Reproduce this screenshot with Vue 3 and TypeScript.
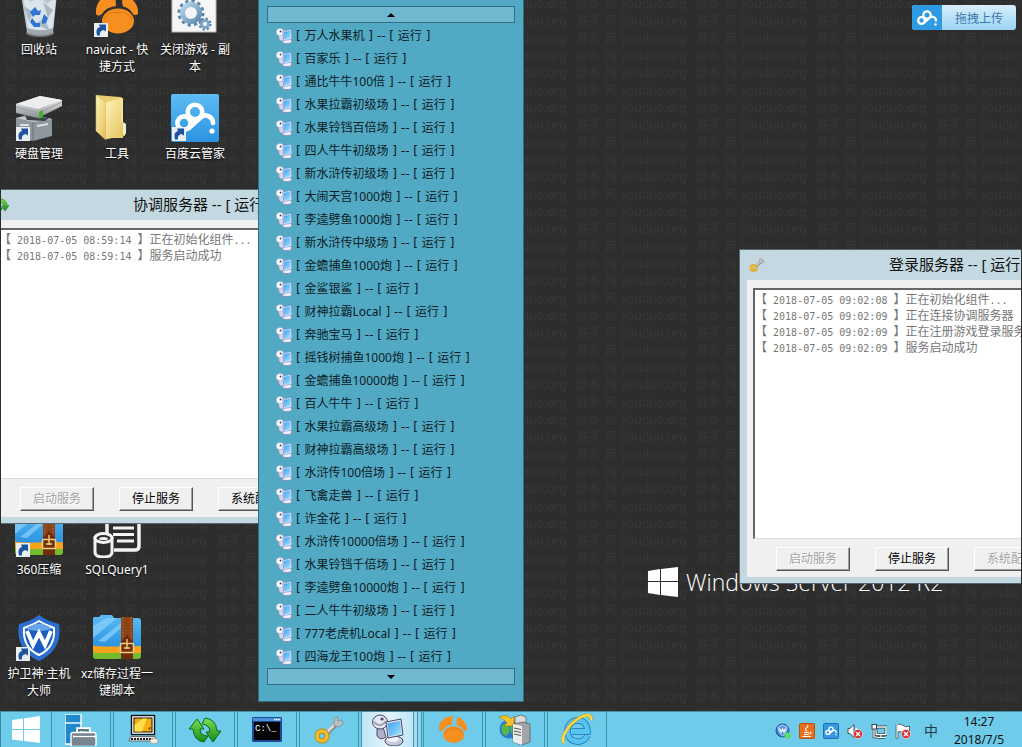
<script setup lang="ts">
import { ref } from 'vue'

interface Shortcut {
  icon: string
  label: string
  col: number
  row: number
  link?: boolean
}

interface LogLine {
  time: string
  text: string
  dots?: boolean
}

interface ServerWindow {
  id: string
  icon: string
  title: string
  configurable: boolean
  log: LogLine[]
}

const shortcuts: Shortcut[] = [
  { icon: 'recycle', label: '回收站', col: 1, row: 1 },
  { icon: 'navicat', label: 'navicat - 快\n捷方式', col: 2, row: 1, link: true },
  { icon: 'gears', label: '关闭游戏 - 副\n本', col: 3, row: 1 },
  { icon: 'disk', label: '硬盘管理', col: 1, row: 2, link: true },
  { icon: 'folder', label: '工具', col: 2, row: 2 },
  { icon: 'cloud', label: '百度云管家', col: 3, row: 2, link: true },
  { icon: 'zip', label: '360压缩', col: 1, row: 6, link: true },
  { icon: 'sql', label: 'SQLQuery1', col: 2, row: 6 },
  { icon: 'shield', label: '护卫神·主机\n大师', col: 1, row: 7, link: true },
  { icon: 'zip', label: 'xz储存过程一\n键脚本', col: 2, row: 7 },
]

const windows: ServerWindow[] = [
  {
    id: 'coordinator',
    icon: 'sync',
    title: '协调服务器 -- [ 运行 ]',
    configurable: true,
    log: [
      { time: '2018-07-05 08:59:14', text: '正在初始化组件', dots: true },
      { time: '2018-07-05 08:59:14', text: '服务启动成功' },
    ],
  },
  {
    id: 'login',
    icon: 'key',
    title: '登录服务器 -- [ 运行 ]',
    configurable: false,
    log: [
      { time: '2018-07-05 09:02:08', text: '正在初始化组件', dots: true },
      { time: '2018-07-05 09:02:09', text: '正在连接协调服务器' },
      { time: '2018-07-05 09:02:09', text: '正在注册游戏登录服务器' },
      { time: '2018-07-05 09:02:09', text: '服务启动成功' },
    ],
  },
]

const games: string[] = [
  '万人水果机', '百家乐', '通比牛牛100倍', '水果拉霸初级场', '水果铃铛百倍场',
  '四人牛牛初级场', '新水浒传初级场', '大闹天宫1000炮', '李逵劈鱼1000炮',
  '新水浒传中级场', '金蟾捕鱼1000炮', '金鲨银鲨', '财神拉霸Local', '奔驰宝马',
  '摇钱树捕鱼1000炮', '金蟾捕鱼10000炮', '百人牛牛', '水果拉霸高级场',
  '财神拉霸高级场', '水浒传100倍场', '飞禽走兽', '诈金花', '水浒传10000倍场',
  '水果铃铛千倍场', '李逵劈鱼10000炮', '二人牛牛初级场', '777老虎机Local',
  '四海龙王100炮',
]

const tasks = [
  { icon: 'manager', name: '服务器管理器' },
  { icon: 'monitor', name: '远程控制' },
  { icon: 'sync', name: '协调服务器' },
  { icon: 'cmd', name: '命令提示符' },
  { icon: 'key', name: '登录服务器' },
  { icon: 'game', name: '游戏服务器' },
  { icon: 'navicat', name: 'Navicat' },
  { icon: 'iis', name: 'IIS 管理器' },
  { icon: 'ie', name: 'Internet Explorer' },
]
const activeTask = ref('game')

const tray = [
  { icon: 't-guard', name: '护卫神' },
  { icon: 't-java', name: 'Java' },
  { icon: 't-cloud', name: '百度云' },
  { icon: 't-sound', name: '音量' },
  { icon: 't-net', name: '网络' },
  { icon: 't-flag', name: '操作中心' },
]
</script>

<template>
  <div class="screen">
    <svg class="defs" aria-hidden="true">
      <defs>
        <linearGradient id="g-blue" x1="0" y1="0" x2="0" y2="1"><stop offset="0" stop-color="#5dbcf5" /><stop offset="1" stop-color="#2b93e0" /></linearGradient>
        <linearGradient id="g-folder" x1="0" y1="0" x2="1" y2="1"><stop offset="0" stop-color="#fdf3b8" /><stop offset="1" stop-color="#e3bf56" /></linearGradient>
        <linearGradient id="g-metal" x1="0" y1="0" x2="0" y2="1"><stop offset="0" stop-color="#f4f4f4" /><stop offset="1" stop-color="#8b8f92" /></linearGradient>
        <linearGradient id="g-screen" x1="0" y1="0" x2="1" y2="1"><stop offset="0" stop-color="#3f9df0" /><stop offset="1" stop-color="#a6e4ff" /></linearGradient>
        <linearGradient id="g-gear" x1="0" y1="0" x2="1" y2="1"><stop offset="0" stop-color="#b4d9ef" /><stop offset="1" stop-color="#6089ad" /></linearGradient>
        <linearGradient id="g-green" x1="0" y1="0" x2="0" y2="1"><stop offset="0" stop-color="#7be052" /><stop offset="1" stop-color="#168a1b" /></linearGradient>

        <symbol id="recycle" viewBox="0 0 48 48">
          <ellipse cx="25" cy="43" rx="14" ry="4" fill="#777" />
          <path d="M6 4H42L38 42Q25 48 12 42Z" fill="#bac7cf" />
          <path d="M8 6L16 12L24 6L32 14L41 7L38 38Q25 42 13 38Z" fill="#dbe4ea" />
          <path d="M9 16L18 22L14 32ZM28 12L38 20L33 28ZM20 34L30 28L34 40Z" fill="#a9bac5" />
          <path d="M15 22l5-5 3 4 3-1-1 5-5 0-2 2zM29 24l4 4-2 5-4 1 0-4 1-3zM17 28l4 5h4v4l-6 0-4-5z" fill="#2f76d2" />
          <path d="M12 38Q25 43 38 38L37.500 43Q25 48 13 43Z" fill="#9fa8ad" />
        </symbol>
        <symbol id="navicat" viewBox="0 0 48 48">
          <g fill="#f58f20">
            <path d="M3 24C2 12 10 4 24 3Q22 8 23 16Q13 17 9 24Q5 27 3 24Z" />
            <path d="M31 4C40 8 46 15 45 24Q42 26 40 24Q37 18 30 16.500Q28 10 31 4Z" />
            <ellipse cx="25" cy="31" rx="16" ry="12.500" />
          </g>
          <path d="M11 29Q17 20 25 23Q33 20 39 29" fill="none" stroke="#da7812" />
        </symbol>
        <symbol id="gears" viewBox="0 0 48 48">
          <rect x="1" y="0" width="44" height="42" fill="#f3f5f7" stroke="#b9bec2" />
          <circle cx="20" cy="23" r="11" fill="none" stroke="#5f84a6" stroke-width="5" stroke-dasharray="3 2.760" />
          <circle cx="20" cy="23" r="8.500" fill="none" stroke="url(#g-gear)" stroke-width="5" />
          <circle cx="34" cy="34" r="5" fill="none" stroke="#557b9e" stroke-width="3" stroke-dasharray="2 1.930" />
          <circle cx="34" cy="34" r="3.500" fill="#fff" stroke="#7ea6c9" stroke-width="3" />
        </symbol>
        <symbol id="disk" viewBox="0 0 48 48">
          <path d="M1 24L14 20L37 25V42L18 47L1 43Z" fill="#8e979b" />
          <path d="M1 24L18 28L37 25L20 21Z" fill="#c3c9cb" />
          <path d="M18 28V47" stroke="#687175" />
          <path d="M5 31H14M22 32L33 30" stroke="#dce1e3" stroke-width="2" />
          <path d="M10 21L34 24L30 27L12 26Z" fill="#3d4346" />
          <path d="M1 10L25 2L47 6V12L23 24L1 19Z" fill="url(#g-metal)" />
          <path d="M1 10L25 2L47 6L23 15Z" fill="#eceded" />
          <path d="M1 13L23 19L47 8" stroke="#9da1a3" fill="none" />
          <path d="M24 18L28 16V23L24 25Z" fill="#45b02b" />
        </symbol>
        <symbol id="folder" viewBox="0 0 48 48">
          <path d="M3 1L27 3Q30 3 30 7V44L10 44Z" fill="#e9cd70" />
          <path d="M12 8L30 4V42L12 45Z" fill="#f5e39a" />
          <path d="M3 1L13 8V46L3 37Z" fill="url(#g-folder)" stroke="#d6b254" stroke-width=".6" />
          <path d="M13 9L28 6V28L32 30V42L13 45Z" fill="url(#g-folder)" />
          <path d="M30 28L33 30V40L30 41Z" fill="#e9ecd0" />
        </symbol>
        <symbol id="cloudmark" viewBox="0 0 48 48">
          <g fill="none" stroke="#fff" stroke-width="4.600" stroke-linecap="round">
            <circle cx="13" cy="29" r="6.600" />
            <circle cx="24" cy="18" r="7.300" />
            <path d="M18 34L29 24Q33 20 37 22Q42 24 42 29" />
          </g>
          <circle cx="41" cy="37" r="2.600" fill="#fff" />
        </symbol>
        <symbol id="cloud" viewBox="0 0 48 48">
          <rect width="48" height="48" rx="2" fill="url(#g-blue)" />
          <use href="#cloudmark" width="48" height="48" />
        </symbol>
        <symbol id="zip" viewBox="0 0 48 48">
          <path d="M0 34H48V42Q48 45 45 45H3Q0 45 0 42Z" fill="#74bb2e" />
          <path d="M0 30H48V39H3Q0 39 0 36Z" fill="#f7a31c" />
          <path d="M0 4Q0 3 2 3H6Q8 0 11 1H18Q20 1 21 4H45Q48 4 48 7V32Q24 33 2 32Q0 32 0 30Z" fill="url(#g-blue)" />
          <path d="M0 12L14 4H24L0 24ZM5 27L28 9V14L12 28Z" fill="#8ad1fb" opacity=".7" />
          <path d="M28 3H40V40H28Z" fill="#8c4318" />
          <path d="M30 3V36M38 3V36" stroke="#c2763a" stroke-dasharray="2 1" stroke-width=".7" />
          <path d="M28 27L34 21L40 27V45H28Z" fill="#6f2d0d" />
          <rect x="27.500" y="29.500" width="13" height="9" rx="1" fill="#73310f" stroke="#f2cf7c" stroke-width="1.600" />
          <path d="M34 25V35M31 34H37" stroke="#f2cf7c" stroke-width="1.400" />
        </symbol>
        <symbol id="sql" viewBox="0 0 48 48">
          <path d="M14 23V5H46V36Q46 40 42 40H21" fill="#2d2d2d" stroke="#f2f2f2" stroke-width="3.500" />
          <path d="M20 12H41M20 18H41M20 24.500H41M24 31H41" stroke="#f2f2f2" stroke-width="3" />
          <path d="M2 28V42Q2 47 10.500 47Q19 47 19 42V28Z" fill="#2d2d2d" stroke="#f2f2f2" stroke-width="3" />
          <ellipse cx="10.500" cy="28" rx="8.500" ry="4.500" fill="#2d2d2d" stroke="#f2f2f2" stroke-width="3" />
          <ellipse cx="10.500" cy="28.500" rx="4.500" ry="1.600" fill="#f2f2f2" />
        </symbol>
        <symbol id="shield" viewBox="0 0 48 48">
          <path d="M24 1C31 6 37 8 44 10C47 28 39 40 24 47C9 40 1 28 4 10C11 8 17 6 24 1Z" fill="#2a6fce" />
          <path d="M24 7C30 11 34 12 39 14C40 27 35 36 24 41C13 36 8 27 9 14C14 12 18 11 24 7Z" fill="#1b5cc0" stroke="#fff" stroke-width="2" />
          <path d="M11 15Q24 4 37 15Q24 19 11 15Z" fill="#69a5ea" />
          <path d="M12 17L18 31L24 19L30 31L36 17" fill="none" stroke="#fff" stroke-width="4" stroke-linejoin="miter" />
        </symbol>
        <symbol id="arrow" viewBox="0 0 14 14">
          <rect width="14" height="14" fill="#e9eef3" />
          <path d="M3 12.500Q1 5 6 4L5 1.500H12V8.500L9.500 7Q5 8 6 12.500Z" fill="#1d539c" />
        </symbol>

        <symbol id="sync" viewBox="0 0 32 32">
          <path d="M0 15L8 5L15 15H11Q11 22 19 22L15 28Q5 27 4 15Z" fill="url(#g-green)" stroke="#0b6a10" />
          <path d="M32 17L24 28L17 18H21Q21 11 13 10L16 4Q27 5 28 17Z" fill="url(#g-green)" stroke="#0b6a10" />
        </symbol>
        <symbol id="key" viewBox="0 0 32 32">
          <path d="M14 19L24 9" stroke="#85898f" stroke-width="5" />
          <path d="M14 18L24 8" stroke="#d5d8dd" stroke-width="3" />
          <path d="M21 4L25 3L25 7L29 6L30 10L26 13L21 12Z" fill="#b9bdc4" stroke="#868a91" stroke-width=".8" />
          <circle cx="9" cy="22" r="5" fill="none" stroke="#b67d0a" stroke-width="5" />
          <circle cx="9" cy="22" r="5" fill="none" stroke="#f4bd2c" stroke-width="3.600" />
        </symbol>
        <symbol id="game" viewBox="0 0 32 32">
          <ellipse cx="22" cy="27" rx="9" ry="5" fill="#c9c9df" stroke="#4a4a6a" />
          <ellipse cx="21" cy="25" rx="6" ry="3" fill="#f4f4fb" />
          <path d="M5 15L11 13L14 23Q9 27 5 22Z" fill="#aeb0c8" stroke="#4a4a6a" />
          <ellipse cx="8" cy="8" rx="7.500" ry="7" fill="#e8e8f2" stroke="#4a4a6a" />
          <path d="M2 8Q8 15 14 7" fill="none" stroke="#9fa0bc" stroke-width="2" />
          <circle cx="10" cy="5" r="1.600" fill="#4a4a6a" />
          <path d="M14 8L29 5L31 21L16 24Z" fill="#dcdff0" stroke="#4a4a6a" />
          <path d="M15.500 9.500L28 7L29.700 19.500L17 22.500Z" fill="url(#g-screen)" />
        </symbol>
        <symbol id="gamesmall" viewBox="0 0 16 16">
          <ellipse cx="11" cy="13" rx="4.700" ry="2.600" fill="#efecfa" stroke="#7a74a0" stroke-width=".6" />
          <path d="M2.500 6L7 6L8 13Q4 13.500 3 11Z" fill="#d8d4ea" stroke="#8782a8" stroke-width=".4" />
          <ellipse cx="4" cy="4" rx="3.800" ry="3.500" fill="#fafafe" stroke="#a3a3c2" stroke-width=".5" />
          <circle cx="4.500" cy="3.500" r=".9" fill="#3a3a4e" />
          <path d="M6.500 3L15 1.500L16 11L8 12.500Z" fill="#cfe2fb" stroke="#7389c4" stroke-width=".5" />
          <path d="M7.500 4L14 2.700L14.800 10L8.500 11.300Z" fill="url(#g-screen)" />
        </symbol>
        <symbol id="manager" viewBox="0 0 32 32">
          <path d="M0 0H16V30H0Z" fill="#2288cc" stroke="#fff" stroke-width="1.400" />
          <path d="M0 9H16" stroke="#fff" stroke-width="1.400" />
          <path d="M13 19V15H24V19" fill="none" stroke="#fff" stroke-width="3.600" />
          <path d="M14 19V16H23V19" fill="none" stroke="#66747f" stroke-width="1.800" />
          <rect x="6" y="18.500" width="25" height="14" rx="2" fill="#768590" stroke="#fff" stroke-width="1.400" />
          <path d="M9 22.500H29" stroke="#fff" stroke-width="1.200" />
          <path d="M8 21l2 1.500-2 1.500zM29 21l2 1.500-2 1.500z" fill="#fff" />
        </symbol>
        <symbol id="monitor" viewBox="0 0 32 32">
          <rect x="4.500" y="1.500" width="23" height="19" fill="#fff" stroke="#111" stroke-width="1.400" />
          <rect x="7" y="4" width="18" height="14" fill="#f7ad0f" stroke="#111" />
          <path d="M7.500 17.500V11L16 4.500H20L15 17.500Z" fill="#ffde4c" />
          <path d="M21 14l3-1-1 3z" fill="#7c3c00" />
          <path d="M4 22.500H28L30 27H2Z" fill="#e7e7e7" stroke="#555" stroke-width=".8" />
          <path d="M4 25H26" stroke="#222" stroke-width="2" stroke-dasharray="2 1" />
          <ellipse cx="27" cy="27" rx="4" ry="2.500" fill="#f6eee7" stroke="#b99c8c" stroke-width=".7" />
        </symbol>
        <symbol id="cmd" viewBox="0 0 32 32">
          <rect x="1" y="3" width="30" height="25" rx="1.500" fill="#1c4a96" />
          <rect x="2" y="4" width="28" height="3" fill="#4e90dc" />
          <path d="M23 5.500H29" stroke="#fff" stroke-width="1.600" stroke-dasharray="1.500 .6" />
          <rect x="3" y="8" width="26" height="18" fill="#050505" />
          <text x="4" y="17" class="prompt">C:\_</text>
        </symbol>
        <symbol id="iis" viewBox="0 0 32 32">
          <circle cx="10" cy="15" r="9.500" fill="#2a7bd0" />
          <path d="M3 11Q8 8 10 13T7 22Q1 19 3 11ZM12 9Q18 8 19 15T14 22Q10 16 12 9Z" fill="#53b845" />
          <path d="M16 3L22 1L27 3V12H16Z" fill="#dcdcdc" stroke="#555" stroke-width=".7" />
          <path d="M0 3Q8 -1 12 5L15 2V12H5L8 9Q5 5 0 3Z" fill="#f6c12b" stroke="#a97800" stroke-width=".6" />
          <path d="M14 10L24 8L31 10V28L23 31L14 28Z" fill="#a2a5a8" stroke="#555" stroke-width=".7" />
          <path d="M14 10L23 12V31L14 28Z" fill="#eceded" />
          <path d="M15 14L22 15.500M15 17L22 18.500M15 20L22 21.500" stroke="#555" />
        </symbol>
        <symbol id="ie" viewBox="0 0 32 32">
          <path d="M26.500 21.500C24 26 20 28 16 27.500C10 27 6.500 23 6.500 17C6.500 11 11 6.500 16.500 6.500C22.500 6.500 26.500 10.500 26.500 17.500H11" fill="none" stroke="#1971b8" stroke-width="6.400" />
          <path d="M26.500 21.500C24 26 20 28 16 27.500C10 27 6.500 23 6.500 17C6.500 11 11 6.500 16.500 6.500C22.500 6.500 26.500 10.500 26.500 17.500H11" fill="none" stroke="#58c4f4" stroke-width="4.800" />
          <path d="M3 29C-1 24 7 11 18 4C25 0 31 0 30 6" fill="none" stroke="#d89e00" stroke-width="3" />
          <path d="M3 29C-1 24 7 11 18 4C25 0 31 0 30 6" fill="none" stroke="#fde04a" stroke-width="2" />
        </symbol>

        <symbol id="t-guard" viewBox="0 0 16 16">
          <circle cx="7.500" cy="7.500" r="6.500" fill="#3d78c6" stroke="#1f57a3" />
          <path d="M7.500 2L12 4Q12 10 7.500 13Q3 10 3 4Z" fill="#5f98df" stroke="#d6e7fa" stroke-width=".8" />
          <path d="M4.500 5.500L6 9L7.500 6L9 9L10.500 5.500" fill="none" stroke="#fff" stroke-width="1.200" />
          <circle cx="12.500" cy="12.500" r="3" fill="#5ddd62" />
        </symbol>
        <symbol id="t-java" viewBox="0 0 16 16">
          <rect x=".5" y=".5" width="15" height="15" rx="1" fill="#e4701c" stroke="#b9500c" />
          <path d="M8 8Q5 6 8 4.500Q9.500 3.500 8.500 2M5 9.500H10M5 11.500H10M3.500 13.500H12M11 9Q13 9.500 11 11" fill="none" stroke="#fff" stroke-width="1.100" />
        </symbol>
        <symbol id="t-cloud" viewBox="0 0 16 16">
          <rect x=".5" y=".5" width="15" height="15" rx="1" fill="#3299e2" stroke="#1f6fb2" />
          <use href="#cloudmark" x="1" y="1" width="14" height="14" />
        </symbol>
        <symbol id="bad" viewBox="0 0 10 10">
          <circle cx="5" cy="5" r="4.500" fill="#d8262c" stroke="#fff" stroke-width=".6" />
          <path d="M3 3L7 7M7 3L3 7" stroke="#fff" stroke-width="1.500" />
        </symbol>
        <symbol id="t-sound" viewBox="0 0 16 16">
          <path d="M1 5.500H3L7 1.500V14.500L3 10.500H1Z" fill="#fff" stroke="#3b4c55" />
          <path d="M9 5Q11 8 9 11" fill="none" stroke="#fff" stroke-width="1.500" />
          <use href="#bad" x="6" y="6" width="10" height="10" />
        </symbol>
        <symbol id="t-net" viewBox="0 0 16 16">
          <rect x="5" y="4" width="10" height="7.500" fill="#6dcae8" stroke="#33434c" stroke-width="3" />
          <rect x="5" y="4" width="10" height="7.500" fill="none" stroke="#fff" stroke-width="1.400" />
          <path d="M6 14.500H14M10 12V14M3 6V14H6" fill="none" stroke="#33434c" stroke-width="2.600" />
          <path d="M6 14.500H14M10 12V14M3 6V14H6" fill="none" stroke="#fff" stroke-width="1.200" />
          <rect x="1" y="1.500" width="4.500" height="4.500" fill="#fff" stroke="#33434c" />
        </symbol>
        <symbol id="t-flag" viewBox="0 0 16 16">
          <path d="M2 1V15.500" stroke="#33434c" stroke-width="2.600" />
          <path d="M2 2Q5 0 8 2.500T14.500 3V10Q11 11 8 9.500T2 9Z" fill="#fff" stroke="#33434c" stroke-width=".8" />
          <path d="M2 1V15" stroke="#fff" stroke-width="1.200" />
          <use href="#bad" x="6" y="6" width="10" height="10" />
        </symbol>

        <pattern id="mark" width="120" height="52" patternUnits="userSpaceOnUse">
          <g class="mark-text">
            <text x="4" y="8">网</text><text x="20" y="8">youduo.org</text><text x="95" y="8">游多</text>
            <text x="4" y="25">网</text><text x="20" y="25">youduo.org</text><text x="95" y="25">游多</text>
            <text x="4" y="43">网</text><text x="20" y="43">youduo.org</text><text x="95" y="43">游多</text>
          </g>
        </pattern>
      </defs>
    </svg>

    <main class="desktop">
      <svg class="wallpaper" aria-hidden="true"><rect width="100%" height="100%" fill="url(#mark)" /></svg>

      <div class="brand">
        <svg width="30" height="30" viewBox="0 0 30 30" aria-hidden="true">
          <path d="M0 4L12 2V14H0ZM13 2L30 0V14H13ZM0 15H12V28L0 26ZM13 15H30V30L13 28Z" fill="#fff" />
        </svg>
        <span>Windows Server 2012 R2</span>
      </div>

      <div class="shortcuts">
        <button
          v-for="s in shortcuts"
          :key="s.label"
          class="shortcut"
          :style="{ gridColumn: s.col, gridRow: s.row }"
        >
          <svg class="pic" viewBox="0 0 48 48" aria-hidden="true">
            <use :href="'#' + s.icon" width="48" height="48" />
            <use v-if="s.link" href="#arrow" x="1" y="33" width="14" height="14" />
          </svg>
          <span class="caption">{{ s.label }}</span>
        </button>
      </div>

      <section v-for="w in windows" :key="w.id" class="window" :class="w.id">
        <header class="titlebar">
          <svg class="winicon" aria-hidden="true"><use :href="'#' + w.icon" /></svg>
          <h2>{{ w.title }}</h2>
        </header>
        <div class="client">
          <div class="log" role="log">
            <p v-for="(l, i) in w.log" :key="i">【<time>{{ ' ' + l.time + ' ' }}</time>】{{ l.text }}<time v-if="l.dots">...</time></p>
          </div>
          <footer class="actions">
            <button disabled>启动服务</button>
            <button>停止服务</button>
            <button :disabled="!w.configurable">系统配置</button>
          </footer>
        </div>
      </section>

      <nav class="flyout" aria-label="游戏服务器">
        <button class="scroll" aria-label="向上"><svg width="8" height="4"><path d="M0 4L4 0L8 4Z" /></svg></button>
        <ul>
          <li v-for="g in games" :key="g">
            <button class="entry">
              <svg width="16" height="16" aria-hidden="true"><use href="#gamesmall" /></svg>
              <span>[ <b>{{ g }}</b> ] -- [ <b>运行</b> ]</span>
            </button>
          </li>
        </ul>
        <button class="scroll" aria-label="向下"><svg width="8" height="4"><path d="M0 0L4 4L8 0Z" /></svg></button>
      </nav>

      <button class="upload">
        <span class="upload-mark"><svg width="24" height="24" aria-hidden="true"><use href="#cloudmark" /></svg></span>
        <span class="upload-text">拖拽上传</span>
      </button>
    </main>

    <footer class="taskbar">
      <button class="start" aria-label="开始">
        <svg width="28" height="28" viewBox="0 0 28 28" aria-hidden="true">
          <path d="M0 4L11 2.500V13H0ZM12 2.400L28 0V13H12ZM0 14H11V25L0 23.500ZM12 14H28V27L12 25Z" fill="#fff" />
        </svg>
      </button>
      <button
        v-for="t in tasks"
        :key="t.icon"
        class="task"
        :class="{ active: activeTask === t.icon }"
        :aria-label="t.name"
        @click="activeTask = t.icon"
      >
        <span class="face"><svg width="32" height="32" aria-hidden="true"><use :href="'#' + t.icon" /></svg></span>
      </button>
      <div class="tray">
        <button v-for="t in tray" :key="t.icon" :aria-label="t.name">
          <svg width="16" height="16" aria-hidden="true"><use :href="'#' + t.icon" /></svg>
        </button>
        <button class="ime">中</button>
        <time class="clock"><span>14:27</span><span>2018/7/5</span></time>
      </div>
    </footer>
  </div>
</template>

<style>
body {
  margin: 0;
  background: #2c2c2c;
}
</style>

<style scoped>
.screen {
  display: flex;
  flex-direction: column;
  height: 100vh;
  overflow: hidden;
  font: 12px/16px "Noto Sans", "Noto Sans CJK SC", sans-serif;
  color: #111;
  background: #2d2d2d;
}
button {
  font: inherit;
  color: inherit;
  margin: 0;
  padding: 0;
  border: 0;
  background: none;
}
.defs {
  position: absolute;
  width: 0;
  height: 0;
}
.prompt {
  font: 9px "Liberation Mono", monospace;
  fill: #fff;
}
.mark-text {
  font: 12px "Noto Sans", "Noto Sans CJK SC", sans-serif;
  fill: #363636;
}
.desktop {
  position: relative;
  flex: 1;
  min-height: 0;
  margin: 0 1px;
  overflow: hidden;
}
.wallpaper {
  position: absolute;
  width: 100%;
  height: 100%;
}
.brand {
  position: absolute;
  left: 647px;
  top: 567px;
  display: flex;
  align-items: center;
  gap: 8px;
  color: #fff;
  font: 300 23px/30px "Open Sans", "Noto Sans", sans-serif;
  white-space: nowrap;
}
.shortcuts {
  position: relative;
  display: grid;
  grid-template-columns: repeat(3, 78px);
  grid-template-rows: repeat(7, 104px);
  margin-top: -10px;
  margin-left: -1px;
}
.shortcut {
  display: flex;
  flex-direction: column;
  align-items: center;
  gap: 3px;
  color: #fff;
}
.pic {
  flex: none;
  width: 48px;
  height: 48px;
}
.caption {
  line-height: 17px;
  white-space: pre;
  text-shadow: 0 1px 2px #000;
}
.window {
  position: absolute;
  display: flex;
  flex-direction: column;
  box-sizing: border-box;
  width: 446px;
  height: 335px;
  padding: 0 7px 6px;
  border: 1px solid #56676f;
  background: #c3d8e0;
}
.coordinator {
  left: -18px;
  top: 189px;
}
.login {
  left: 738px;
  top: 249px;
}
.titlebar {
  display: flex;
  align-items: center;
  height: 30px;
}
.winicon {
  flex: none;
  width: 16px;
  height: 16px;
  margin-left: 2px;
}
.titlebar h2 {
  flex: 1;
  margin: 0 24px 2px 0;
  font: 15px/20px "Noto Sans", "Noto Sans CJK SC", sans-serif;
  text-align: center;
}
.client {
  flex: 1;
  display: flex;
  flex-direction: column;
  padding: 8px 6px 6px;
  background: #f0f0f0;
}
.log {
  flex: 1;
  padding: 1px 0;
  border-top: 2px solid #666;
  border-left: 2px solid #666;
  border-bottom: 1px solid #dcdcdc;
  background: #fff;
  color: #777;
  font-family: "Noto Sans CJK SC", sans-serif;
}
.log p {
  margin: 0;
  white-space: pre;
}
.log time {
  font: 10px/0 "DejaVu Sans Mono", monospace;
}
.actions {
  display: flex;
  gap: 25px;
  padding: 8px 23px 0;
}
.actions button {
  box-sizing: border-box;
  width: 74px;
  height: 24px;
  border: 1px solid;
  border-color: #fff #555 #555 #fff;
  box-shadow: inset -1px -1px #a0a0a0;
  color: #000;
}
.actions button:disabled {
  color: #a3a3a3;
  text-shadow: 1px 1px #fff;
}
.flyout {
  position: absolute;
  left: 257px;
  top: -1px;
  box-sizing: border-box;
  width: 266px;
  padding: 6px 8px 16px;
  border: 1px solid #2e7187;
  background: #52a9c4;
}
.flyout ul {
  margin: 0;
  padding: 1px 0 0;
  list-style: none;
}
.scroll {
  display: flex;
  align-items: center;
  justify-content: center;
  box-sizing: border-box;
  width: 100%;
  height: 17px;
  border: 1px solid #2f6e85;
  background: #70b8cf;
}
.entry {
  display: flex;
  align-items: center;
  gap: 4px;
  width: 100%;
  height: 23px;
  padding-left: 9px;
  font-family: "DejaVu Sans", sans-serif;
  white-space: nowrap;
  color: #0c1c24;
}
.entry b {
  font: 12px/16px "Noto Sans", "Noto Sans CJK SC", sans-serif;
}
.upload {
  position: absolute;
  top: 5px;
  right: 5px;
  display: flex;
  width: 104px;
  height: 25px;
  border-radius: 3px;
  overflow: hidden;
  background: linear-gradient(#d8eefb, #9bd5f4);
  color: #3b78ad;
}
.upload-mark {
  display: flex;
  align-items: center;
  justify-content: center;
  width: 30px;
  height: 25px;
  background: #2c9be3;
}
.upload-text {
  flex: 1;
  line-height: 27px;
}
.taskbar {
  display: flex;
  height: 36px;
  overflow: hidden;
  border-top: 1px solid #4c8ba0;
  box-sizing: border-box;
  background: #6ecbe9;
}
.start {
  width: 51px;
  border-left: 1px solid #3f88a3;
}
.start svg {
  display: block;
  margin: 0 auto;
}
.task {
  display: flex;
  box-sizing: border-box;
  width: 62px;
  padding-right: 2px;
}
.face {
  display: flex;
  flex: 1;
  align-items: center;
  justify-content: center;
  height: 36px;
  border: solid #3f93b1;
  border-width: 0 1px;
}
.active .face {
  flex: none;
  width: 51px;
  background: linear-gradient(90deg, #bfe6f5, #e3f4fb, #bfe6f5);
  box-shadow: 3px 0 #a6dcf0, 4px 0 #3f93b1, 7px 0 #8cd4ec, 8px 0 #3f93b1;
}
.tray {
  display: flex;
  align-items: center;
  gap: 8px;
  margin-left: auto;
  padding: 3px 16px 0 0;
}
.tray button {
  height: 16px;
}
.tray svg {
  display: block;
}
.tray .ime {
  width: 20px;
  margin: 0 3px 0 2px;
  font-size: 14px;
  line-height: 16px;
  color: #263b45;
}
.clock {
  display: flex;
  flex-direction: column;
  align-items: center;
  width: 54px;
  line-height: 18px;
}
</style>
